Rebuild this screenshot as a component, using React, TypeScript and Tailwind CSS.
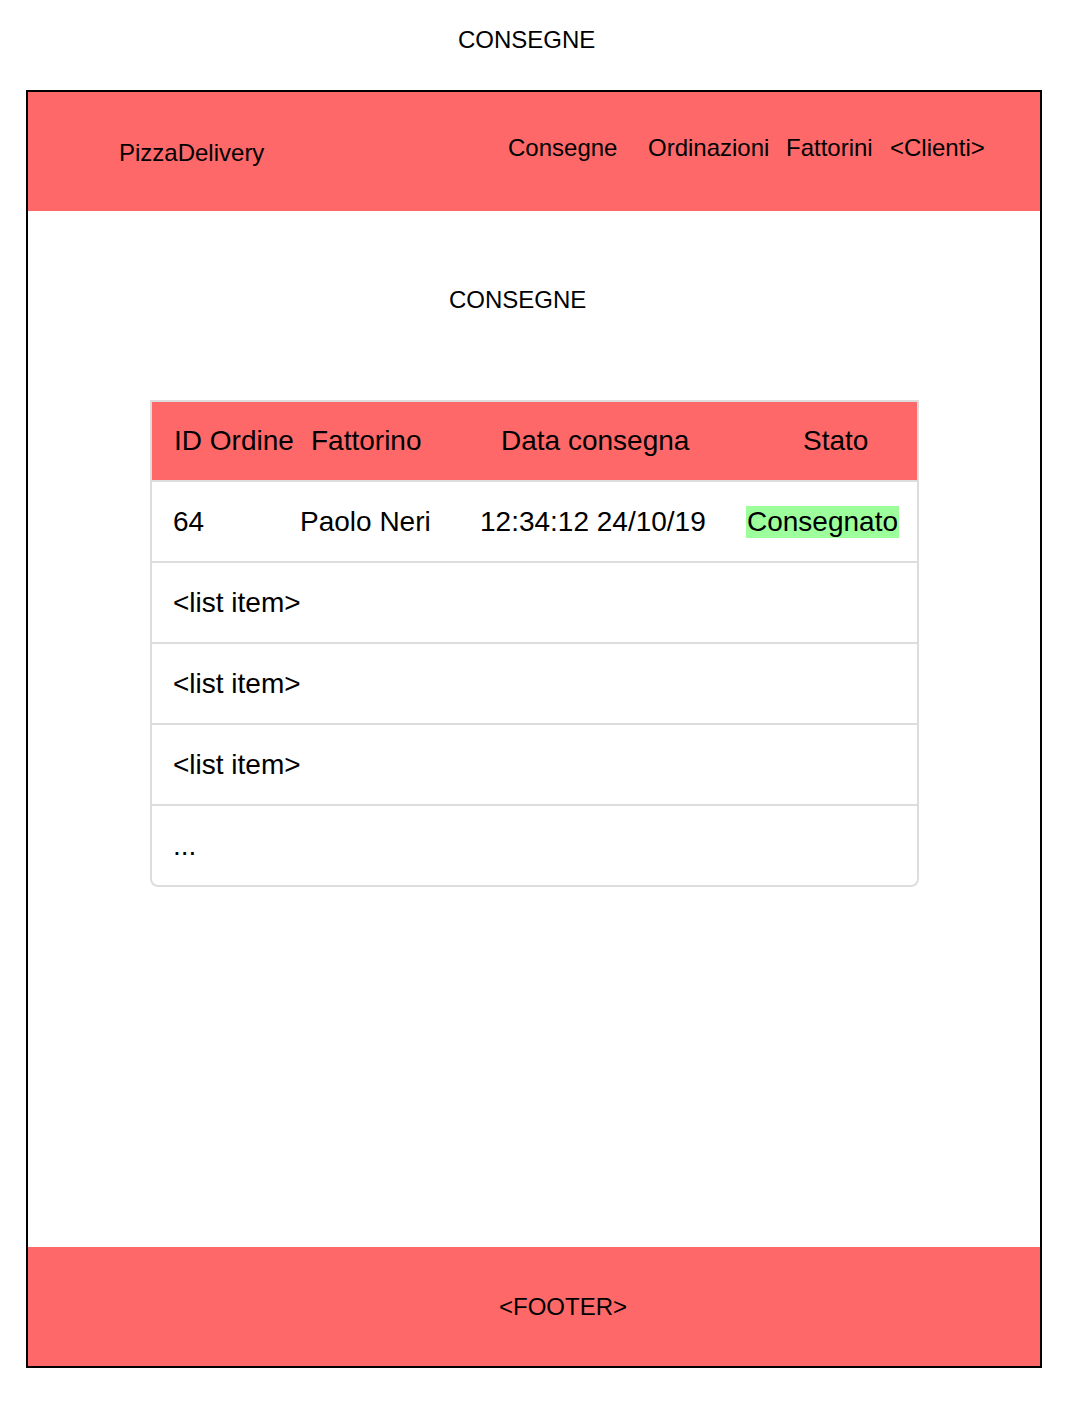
import React from "react";

const RED = "bg-[#ff6868]";

export default function App() {
  const font = { fontFamily: '"Liberation Sans", Arial, Helvetica, sans-serif' };
  return (
    <div className="w-[1070px] h-[1402px] bg-white text-black" style={font}>
      <div className="h-[90px] pt-[26px] pl-[458px] text-[24px] leading-[28px]">CONSEGNE</div>
      <div className="ml-[26px] w-[1016px] h-[1278px] border-2 border-black flex flex-col">
        <header className={`${RED} h-[119px] flex items-start text-[24px] leading-[28px]`}>
          <div className="pl-[91px] pt-[47px] w-[480px]">PizzaDelivery</div>
          <nav className="pt-[42px] flex">
            <span className="w-[140px]">Consegne</span>
            <span className="w-[138px]">Ordinazioni</span>
            <span className="w-[104px]">Fattorini</span>
            <span>&lt;Clienti&gt;</span>
          </nav>
        </header>
        <main className="flex-1 flex flex-col">
          <div className="pt-[75px] pl-[421px] text-[24px] leading-[28px]">CONSEGNE</div>
          <div className="mt-[86px] ml-[122px] w-[769px] border-2 border-[#dddddd] rounded-b-[8px] text-[28px] leading-[32px]">
            <div className={`${RED} h-[78px] flex items-center`}>
              <span className="pl-[22px] w-[159px]">ID Ordine</span>
              <span className="w-[190px]">Fattorino</span>
              <span className="w-[302px]">Data consegna</span>
              <span>Stato</span>
            </div>
            <div className="h-[81px] flex items-center border-t-2 border-[#dddddd]">
              <span className="pl-[21px] w-[148px]">64</span>
              <span className="w-[180px]">Paolo Neri</span>
              <span className="w-[266px]">12:34:12 24/10/19</span>
              <span className="bg-[#9cff9c] px-[1px]">Consegnato</span>
            </div>
            {["<list item>", "<list item>", "<list item>", "..."].map((t, i) => (
              <div key={i} className="h-[81px] flex items-center border-t-2 border-[#dddddd] pl-[21px]">
                {t}
              </div>
            ))}
          </div>
        </main>
        <footer className={`${RED} h-[119px] flex items-center justify-center text-[24px] leading-[28px]`}>
          <span className="ml-[58px]">&lt;FOOTER&gt;</span>
        </footer>
      </div>
    </div>
  );
}
